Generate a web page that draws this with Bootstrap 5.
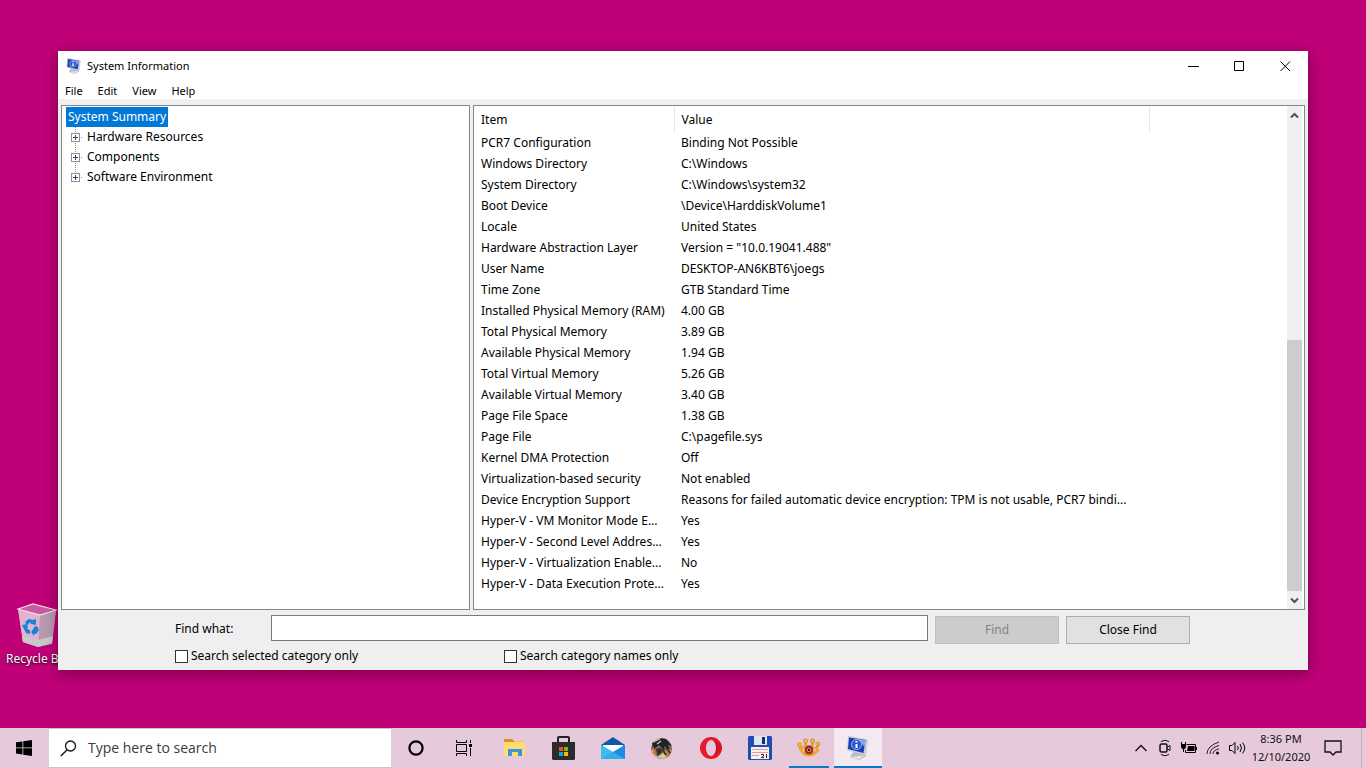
<!DOCTYPE html>
<html lang="en">
<head>
<meta charset="utf-8">
<meta name="viewport" content="width=device-width, initial-scale=1">
<title>System Information</title>
<link rel="stylesheet" href="https://cdn.jsdelivr.net/npm/bootstrap@5.3.0/dist/css/bootstrap.min.css">
<style>
  body { background: #c00077; color: #000; font-family: "Noto Sans", "Open Sans", sans-serif; font-size: 12px; line-height: 20px; }
  svg { display: block; flex: none; }
  .desktop { min-height: 100vh; }
  .recycle { left: 0; top: 602px; width: 73px; color: #fff; line-height: 16px; text-shadow: 0 1px 2px #000; }
  .recycle-name { margin-top: 3px; padding-left: 6px; white-space: nowrap; }
  .app-window { margin: 51px 58px 58px; background: #efefef; box-shadow: 0 3px 14px rgba(0,0,0,.4); z-index: 1; }
  .title-bar { height: 30px; padding-left: 8px; font-size: 11px; }
  .title-bar button, .taskbar button { border: 0; background: none; padding: 0; display: flex; align-items: center; justify-content: center; }
  .title-bar button { width: 46px; height: 29px; }
  .title-text { margin-left: 5px; }
  .menu-bar { height: 18px; padding-left: 7px; font-size: 11px; line-height: 20px; gap: 15px; }
  .menu-bar a, .tree a { color: #000; text-decoration: none; }
  .panes { padding: 6px 3px 0; gap: 3px; }
  .pane { background: #fff; border: 1px solid #828790; }
  .tree-pane { flex: 0 0 409px; padding: 1px 4px; }
  .tree a.root-item { background: #0078d7; color: #fff; padding: 0 2px; display: inline-block; }
  .tree li { height: 20px; }
  .tree svg { margin-left: 4px; margin-right: 5px; }
  .info-table { table-layout: fixed; width: 100%; }
  .info-table th { font-weight: 400; height: 26px; padding: 1px 0 0 7px; }
  .info-table .split { border-right: 1px solid #e5e5e5; }
  .info-table td { height: 21px; line-height: 21px; padding: 0 0 0 7px; white-space: nowrap; }
  .col-item { width: 200px; }
  .col-value { width: 475px; }
  .scroll { width: 17px; padding-right: 2px; }
  .scroll-track { background: #f0f0f0; }
  .scroll button { border: 0; background: none; padding: 0; height: 18px; width: 15px; display: flex; align-items: center; justify-content: center; }
  .thumb { background: #cdcdcd; height: 251px; }
  .find-bar { padding: 5px 118px 0 117px; height: 60px; }
  .find-bar .find-label { width: 89px; }
  .find-row { gap: 7px; }
  .find-bar input[type=text] { height: 26px; border: 1px solid #7a7a7a; background: #fff; min-width: 0; }
  .find-bar button { width: 124px; height: 28px; border: 1px solid #adadad; background: #e1e1e1; color: #000; padding: 0; margin-top: 1px; }
  .find-bar button:disabled { background: #ccc; border-color: #bfbfbf; color: #838383; }
  .find-bar input[type=checkbox] { appearance: none; width: 13px; height: 13px; border: 1px solid #333; background: #fff; margin: 0; }
  .check-row { margin-top: 2px; }
  .check-cell { width: 329px; gap: 3px; }
  .taskbar { height: 40px; background: #e6c9db; }
  .taskbar .start { width: 49px; padding-right: 2px; }
  .search-box { width: 342px; background: #fff; border: 1px solid #c9c5c8; border-left: 0; border-right: 0; padding-left: 11px; gap: 11px; }
  .search-box input { border: 0; outline: 0; padding: 0; background: none; font-size: 14px; min-width: 0; font-family: "Open Sans", "Noto Sans", sans-serif; }
  .search-box input::placeholder { color: #3b3b3b; opacity: 1; }
  .pinned { margin-left: 1px; }
  .taskbar .task { width: 49px; border-bottom: 2px solid transparent; padding-top: 2px; }
  .taskbar .task-view { padding-right: 2px; }
  .taskbar .running { width: 40px; margin: 0 5px; border-bottom-color: #0a78cf; }
  .taskbar .active { background: #f4e9f0; width: 48px; border-bottom-color: #0a78cf; }
  .taskbar .tray-btn { width: 24px; }
  .taskbar .clock { width: 64px; font-size: 11px; line-height: 18px; flex-direction: column; color: #111; }
  .taskbar .action { width: 40px; }
  .taskbar .peek { width: 5px; margin-left: 8px; border-left: 1px solid #c9a9bd; }
</style>
</head>
<body>
<div class="desktop d-flex flex-column position-relative overflow-hidden">

  <div class="recycle position-absolute">
    <svg class="mx-auto" width="42" height="46" viewBox="0 0 42 46">
      <path d="M2 7 17 2 40 8 36 42 22 45 7 40Z" fill="#cd9dbd"/>
      <path d="M2 7 17 2 40 8 26 13Z" fill="#c95a9f"/>
      <path d="M24 13 40 8 36 40 22 44Z" fill="#bb9ab0"/>
      <path d="M2 7 24 13 22 44 7 40Z" fill="#e0b3d0"/>
      <path d="M6 34 22 38 37 34 36 41 22 45 7 40Z" fill="#c8c9c9"/>
      <path d="M2 7 17 2 40 8 24 13Z" fill="none" stroke="#f0dbe8" stroke-width="1.200"/>
      <g fill="#1683d6"><path d="M10 19 13 17 17 18 20 17 20 23 15 22 14 20 12 23 9 21Z"/><path d="M6 23 11 22 12 25 11 27 14 28V32L10 31Z"/><path d="M18 25 21 24 23 28 20 32 18 32V34L15 30 18 26Z"/></g>
    </svg>
    <div class="recycle-name">Recycle Bin</div>
  </div>

  <main class="app-window d-flex flex-column flex-grow-1">
    <header class="title-bar bg-white d-flex align-items-center">
      <svg width="16" height="16" viewBox="0 0 24 24"><use href="#sysinfo"/></svg>
      <span class="title-text">System Information</span>
      <div class="ms-auto d-flex">
        <button aria-label="Minimize"><svg width="11" height="11"><path d="M0 5.500H11" stroke="#000"/></svg></button>
        <button aria-label="Maximize"><svg width="11" height="11"><path d="M.5.5H9.500V9.500H.5Z" fill="none" stroke="#000"/></svg></button>
        <button aria-label="Close"><svg width="11" height="11"><path d="M.5.5 10 10M10 .5.5 10" stroke="#000"/></svg></button>
      </div>
    </header>
    <nav class="menu-bar bg-white d-flex">
      <a href="#">File</a><a href="#">Edit</a><a href="#">View</a><a href="#">Help</a>
    </nav>

    <div class="panes d-flex flex-grow-1">
      <section class="pane tree-pane">
        <ul class="tree list-unstyled mb-0">
          <li><a href="#" class="root-item">System Summary</a></li>
          <li class="d-flex"><svg width="12" height="20"><use href="#branch"/></svg><a href="#">Hardware Resources</a></li>
          <li class="d-flex"><svg width="12" height="20"><use href="#branch"/></svg><a href="#">Components</a></li>
          <li class="d-flex"><svg width="12" height="20"><use href="#branch-end"/></svg><a href="#">Software Environment</a></li>
        </ul>
      </section>

      <section class="pane d-flex flex-grow-1">
        <div class="flex-grow-1 overflow-hidden">
          <table class="info-table">
            <colgroup><col class="col-item"><col class="col-value"><col></colgroup>
            <thead><tr><th class="split">Item</th><th class="split">Value</th><th></th></tr></thead>
            <tbody>
              <tr><td>PCR7 Configuration</td><td>Binding Not Possible</td></tr>
              <tr><td>Windows Directory</td><td>C:\Windows</td></tr>
              <tr><td>System Directory</td><td>C:\Windows\system32</td></tr>
              <tr><td>Boot Device</td><td>\Device\HarddiskVolume1</td></tr>
              <tr><td>Locale</td><td>United States</td></tr>
              <tr><td>Hardware Abstraction Layer</td><td>Version = "10.0.19041.488"</td></tr>
              <tr><td>User Name</td><td>DESKTOP-AN6KBT6\joegs</td></tr>
              <tr><td>Time Zone</td><td>GTB Standard Time</td></tr>
              <tr><td>Installed Physical Memory (RAM)</td><td>4.00 GB</td></tr>
              <tr><td>Total Physical Memory</td><td>3.89 GB</td></tr>
              <tr><td>Available Physical Memory</td><td>1.94 GB</td></tr>
              <tr><td>Total Virtual Memory</td><td>5.26 GB</td></tr>
              <tr><td>Available Virtual Memory</td><td>3.40 GB</td></tr>
              <tr><td>Page File Space</td><td>1.38 GB</td></tr>
              <tr><td>Page File</td><td>C:\pagefile.sys</td></tr>
              <tr><td>Kernel DMA Protection</td><td>Off</td></tr>
              <tr><td>Virtualization-based security</td><td>Not enabled</td></tr>
              <tr><td>Device Encryption Support</td><td>Reasons for failed automatic device encryption: TPM is not usable, PCR7 bindi...</td></tr>
              <tr><td>Hyper-V - VM Monitor Mode E...</td><td>Yes</td></tr>
              <tr><td>Hyper-V - Second Level Addres...</td><td>Yes</td></tr>
              <tr><td>Hyper-V - Virtualization Enable...</td><td>No</td></tr>
              <tr><td>Hyper-V - Data Execution Prote...</td><td>Yes</td></tr>
            </tbody>
          </table>
        </div>
        <div class="scroll d-flex flex-column">
          <div class="scroll-track d-flex flex-column flex-grow-1">
            <button aria-label="Scroll up"><svg width="9" height="7"><path d="M1 5.500 4.500 2 8 5.500" fill="none" stroke="#505050" stroke-width="2"/></svg></button>
            <div class="thumb mt-auto"></div>
            <button aria-label="Scroll down"><svg width="9" height="7"><path d="M1 1.500 4.500 5 8 1.500" fill="none" stroke="#505050" stroke-width="2"/></svg></button>
          </div>
        </div>
      </section>
    </div>

    <form class="find-bar" onsubmit="return false">
      <div class="find-row d-flex align-items-start">
        <label for="find" class="find-label pt-1 flex-shrink-0">Find what:</label>
        <input type="text" id="find" class="flex-grow-1">
        <button disabled>Find</button>
        <button type="button">Close Find</button>
      </div>
      <div class="check-row d-flex">
        <div class="check-cell d-flex align-items-center"><input type="checkbox" id="sel"><label for="sel">Search selected category only</label></div>
        <div class="check-cell d-flex align-items-center"><input type="checkbox" id="names"><label for="names">Search category names only</label></div>
      </div>
    </form>
  </main>

  <footer class="taskbar d-flex">
    <button class="start" aria-label="Start"><svg width="16" height="16"><path d="M0 2.300 6.500 1.400V7.500H0ZM7.300 1.300 16 0V7.500H7.300ZM0 8.300H6.500V14.500L0 13.600ZM7.300 8.300H16V16L7.300 14.700Z"/></svg></button>
    <div class="search-box d-flex align-items-center">
      <svg width="17" height="17"><circle cx="10.500" cy="6" r="5" fill="none" stroke="#111" stroke-width="1.300"/><path d="M7 10 .8 16" stroke="#111" stroke-width="1.400"/></svg>
      <input type="text" class="flex-grow-1" placeholder="Type here to search" aria-label="Search">
    </div>
    <button class="task" aria-label="Cortana"><svg width="16" height="16"><circle cx="8" cy="8" r="6.600" fill="none" stroke="#000" stroke-width="2.200"/></svg></button>
    <button class="task task-view" aria-label="Task view"><svg width="16" height="16" fill="none" stroke="#000"><path d="M.5 0V2.500H10.500V0M.5 4.500H10.500V11.500H.5ZM.5 16V13.500H10.500V16M14.500 0V3M14.500 8V16"/><path d="M13 4H16V7H13Z" fill="#000" stroke="none"/></svg></button>
    <div class="pinned d-flex">
      <button class="task" aria-label="File Explorer"><svg width="22" height="20"><path d="M0 1H8L10 3H21V18H0Z" fill="#f5c451"/><path d="M0 1H8L10 3V4H0Z" fill="#d9931e"/><path d="M0 4H21V18H0Z" fill="#ffdc72"/><path d="M4 11H18V18H14V14H8V18H4Z" fill="#3d95d5"/></svg></button>
      <button class="task" aria-label="Microsoft Store"><svg width="24" height="24"><path d="M6 7V2Q6 1 7 1H16Q17 1 17 2V7" fill="none" stroke="#222" stroke-width="2"/><path d="M0 6H23V23L22 24H1L0 23Z" fill="#2b2b2d"/><path d="M7 11H11V15H7Z" fill="#f25022"/><path d="M12 11H16V15H12Z" fill="#7fba00"/><path d="M7 16H11V20H7Z" fill="#00a4ef"/><path d="M12 16H16V20H12Z" fill="#ffb900"/></svg></button>
      <button class="task" aria-label="Mail"><svg width="24" height="22"><path d="M0 8 12 0 24 8V12H0Z" fill="#0f5aa8"/><path d="M2 8H22V14L12 18 2 14Z" fill="#fff"/><path d="M0 8 12 15 24 8V22H0Z" fill="#35b5f0"/><path d="M0 22 24 8V22Z" fill="#1b8de0"/><path d="M0 8 24 22H0Z" fill="#3fc3f5" opacity=".6"/></svg></button>
      <button class="task" aria-label="Game"><svg width="23" height="23"><circle cx="11.500" cy="11.500" r="10.500" fill="#77695d"/><path d="M2 6Q8 0 16 2L22 9 18 8 20 13 14 9 15 14 9 8 4 12Z" fill="#202325"/><path d="M3 5 10 1.500M7 7 11 4M2 13 4 18 8 21" fill="none" stroke="#c9c3b8" stroke-width="1.500"/><path d="M3 10 5 13 6 18 3 16Z" fill="#f06a30"/><path d="M6 12 11 11 12 15 8 19Z" fill="#3a2a1e"/><path d="M12 14 22 12 19 18 14 20Z" fill="#b98045"/><path d="M7 20 13 16 17 20 12 22Z" fill="#d8c8a4"/><path d="M12 12 16 18M16 10 20 16" stroke="#3c2a1c" stroke-width="1.500"/></svg></button>
      <button class="task" aria-label="Opera"><svg width="24" height="24"><path fill-rule="evenodd" d="M12 1A11 11 0 1 0 12 23 11 11 0 1 0 12 1ZM12 4C15 4 17 8 17 12S15 20 12 20 7 16 7 12 9 4 12 4Z" fill="#e8192c"/><path d="M15 4.500Q17 7 17 12T15 19.500Q20 18 23 12 20 5 15 4.500Z" fill="#b50f1d" opacity=".5"/></svg></button>
      <button class="task" aria-label="Save tool"><svg width="24" height="24"><rect width="24" height="24" rx="1.500" fill="#1a4fb4"/><rect x="6" width="13" height="9" fill="#dfe6ee"/><rect x="14" y="1" width="3" height="7" fill="#1c2f6b"/><rect x="3" y="11" width="18" height="12" fill="#fbeeee"/><path d="M4 13.500H20M4 16.500H20M4 19.500H11" stroke="#e59a9a"/><path d="M13 18.500H15.500V20L13.500 21.500H16M18.500 18V22" fill="none" stroke="#222"/></svg></button>
      <button class="task running" aria-label="Image viewer"><svg width="24" height="20"><g stroke="#d58a1a" stroke-width="2"><path d="M4 11 2 6M9 9 8 3M15 9 16 3M19 11 22 6"/></g><g fill="#f1b63c" stroke="#c98020" stroke-width=".6"><circle cx="2.500" cy="6.500" r="2"/><circle cx="8.500" cy="3" r="2.200"/><circle cx="15.500" cy="3" r="2.200"/><circle cx="21" cy="6" r="2"/></g><path d="M1 10Q12 3 23 12L18 17Q11 20 6 17Z" fill="#e9a73a"/><path d="M5 12Q12 6 19 12 12 19 5 12Z" fill="#f6d9b0"/><circle cx="12" cy="12" r="4.500" fill="#a82b20"/><circle cx="12" cy="12" r="2" fill="#d9a090"/><circle cx="12" cy="12" r="1.200" fill="#3b1111"/></svg></button>
      <button class="task active" aria-label="System Information"><svg width="24" height="24"><use href="#sysinfo"/></svg></button>
    </div>

    <div class="ms-auto d-flex">
      <button class="tray-btn" aria-label="Hidden icons"><svg width="12" height="12"><path d="M.5 9 6 3.500 11.500 9" fill="none" stroke="#111" stroke-width="1.300"/></svg></button>
      <button class="tray-btn" aria-label="Meet now"><svg width="12" height="18" fill="none" stroke="#111"><path d="M2 2.500Q6 0 10 2.500M2 15.500Q6 18 10 15.500"/><rect x="1" y="5" width="7" height="8" rx="1.500" stroke-width="1.500"/><path d="M8.500 8 11 6.500V11.500L8.500 10"/></svg></button>
      <button class="tray-btn" aria-label="Battery"><svg width="17" height="14"><path d="M5.500 3.500H14.500V11.500H4.500V9" fill="none" stroke="#000"/><path d="M7 5H13.500V10H6ZM15 6H16V9H15ZM0 3H5V6L4 8H1L0 6ZM0 1H1V3H0ZM4 1H5V3H4Z"/><path d="M2.500 8V11" stroke="#000"/></svg></button>
      <button class="tray-btn" aria-label="Network"><svg width="14" height="14" fill="none" stroke="#222"><path d="M1 13Q1 5 13 1M4 13Q4 7 13 4.500M7 13Q7 9 13 8"/><circle cx="11.500" cy="12" r="1.500" fill="#000" stroke="none"/></svg></button>
      <button class="tray-btn" aria-label="Volume"><svg width="17" height="14" fill="none" stroke="#000"><path d="M.5 4.500H3L6 1.500V12.500L3 9.500H.5ZM8.500 5Q10 7 8.500 9M11 3Q14 7 11 11M13.500 1.500Q18 7 13.500 12.500"/></svg></button>
      <button class="clock"><span>8:36 PM</span><span>12/10/2020</span></button>
      <button class="action" aria-label="Notifications"><svg width="18" height="17"><path d="M1 1H17V12H12L9 15 6 12H1Z" fill="none" stroke="#111" stroke-width="1.300"/></svg></button>
      <div class="peek"></div>
    </div>
  </footer>
</div>

<svg width="0" height="0" class="position-absolute">
  <defs>
    <g id="sysinfo"><path d="M8 15 18 16 20 20 13 24 4 21Z" fill="#b9bcc4"/><path d="M5 21 18 19.500 13 23Z" fill="#e8e8eb"/><path d="M2 0 20 3 22 4 20 19 18 19 1 14Z" fill="#c9ccd6"/><path d="M3 1.500 19.500 4 17.500 17 2 13Z" fill="#1c3fb4"/><path d="M12 3 19.500 4 18.500 11Z" fill="#86a6ea"/><circle cx="10.500" cy="8.500" r="5" fill="#2a58cf" stroke="#9bb8f2"/><path d="M10.500 5V6.500M10.500 8V12" stroke="#fff" stroke-width="2"/></g>
    <g id="plus-box"><rect x="1.500" y="6.500" width="8" height="8" fill="#fff" stroke="#919191"/><path d="M3 10.500H8M5.500 8V13" stroke="#2b4a7a"/></g>
    <symbol id="branch" viewBox="0 0 12 20"><path d="M5.500 0V20M9 10.500H12" stroke="#888" stroke-dasharray="1 1"/><use href="#plus-box"/></symbol>
    <symbol id="branch-end" viewBox="0 0 12 20"><path d="M5.500 0V6M9 10.500H12" stroke="#888" stroke-dasharray="1 1"/><use href="#plus-box"/></symbol>
  </defs>
</svg>
<script src="https://cdn.jsdelivr.net/npm/bootstrap@5.3.0/dist/js/bootstrap.bundle.min.js"></script>
</body>
</html>
